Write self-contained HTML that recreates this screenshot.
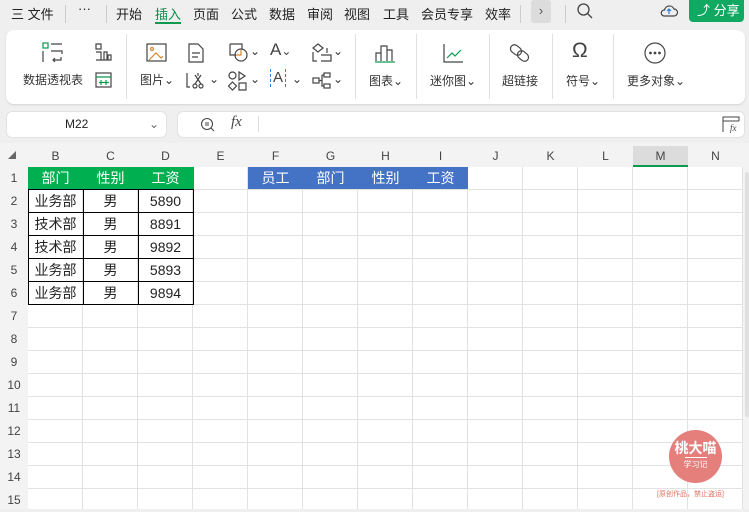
<!DOCTYPE html><html><head><meta charset="utf-8"><style>
*{margin:0;padding:0;box-sizing:border-box}
body{width:749px;height:509px;overflow:hidden;background:#efefef;font-family:"Liberation Sans","Noto Sans CJK SC",sans-serif;color:#222;position:relative}
.a{position:absolute}
.t{font-size:13px;top:4px}
.rb{font-size:12px;color:#333}
.vs{position:absolute;width:1px;background:#e0e0e0}
.ic{position:absolute;stroke:#444;fill:none;stroke-width:1.2}
.ch{position:absolute;top:146px;height:21px;width:55px;text-align:center;font-size:12px;line-height:21px;color:#444}
.rh{position:absolute;left:0;width:28px;text-align:center;font-size:12px;color:#444;height:23px;line-height:23px}
.c{position:absolute;width:55px;height:23px;line-height:22px;text-align:center;font-size:14px}
</style></head><body>
<div class="a t" style="left:11px">三 文件</div>
<div class="a" style="left:65px;top:5px;width:1px;height:18px;background:#ccc"></div>
<div class="a t" style="left:78px;top:1px">···</div>
<div class="a" style="left:106px;top:5px;width:1px;height:18px;background:#ccc"></div>
<div class="a t" style="left:116px">开始</div>
<div class="a t" style="left:155px;color:#0a8f4a">插入</div>
<div class="a" style="left:155px;top:22px;width:26px;height:2px;background:#0a9a50"></div>
<div class="a t" style="left:193px">页面</div>
<div class="a t" style="left:231px">公式</div>
<div class="a t" style="left:269px">数据</div>
<div class="a t" style="left:307px">审阅</div>
<div class="a t" style="left:344px">视图</div>
<div class="a t" style="left:383px">工具</div>
<div class="a t" style="left:421px">会员专享</div>
<div class="a t" style="left:485px">效率</div>
<div class="a" style="left:520px;top:5px;width:1px;height:18px;background:#ccc"></div>
<div class="a" style="left:531px;top:0;width:20px;height:23px;background:#dcdcdc;border-radius:3px;text-align:center;font-size:13px;line-height:22px;color:#555">›</div>
<div class="a" style="left:565px;top:5px;width:1px;height:18px;background:#ccc"></div>
<svg class="a" style="left:576px;top:2px" width="18" height="18"><circle cx="7.5" cy="7.5" r="5.5" stroke="#444" fill="none" stroke-width="1.3"/><path d="M11.5 11.5L16 16" stroke="#444" stroke-width="1.3"/></svg>
<svg class="a" style="left:659px;top:3px" width="20" height="16"><path d="M5 13h10a3.5 3.5 0 0 0 0-7 5 5 0 0 0-9.5 1A3 3 0 0 0 5 13z" stroke="#444" fill="none" stroke-width="1.2"/><path d="M10 11V6M8 8l2-2 2 2" stroke="#2f7de1" fill="none" stroke-width="1.2"/></svg>
<div class="a" style="left:689px;top:0;width:55px;height:22px;background:#11a862;border-radius:0 0 4px 4px;color:#fff;font-size:13px;line-height:21px;padding-left:8px">⤴ 分享</div>
<div class="a" style="left:6px;top:30px;width:739px;height:74px;background:#fff;border-radius:8px;box-shadow:0 1px 2px rgba(0,0,0,.12)"></div>
<div class="vs" style="left:126px;top:34px;height:65px"></div>
<div class="vs" style="left:355px;top:34px;height:65px"></div>
<div class="vs" style="left:416px;top:34px;height:65px"></div>
<div class="vs" style="left:489px;top:34px;height:65px"></div>
<div class="vs" style="left:552px;top:34px;height:65px"></div>
<div class="vs" style="left:613px;top:34px;height:65px"></div>
<svg class="ic" style="left:42px;top:42px" width="22" height="22"><rect x="1" y="1" width="5" height="5" stroke="#0a9a50"/><path d="M9 2h11M1 9v11M9 9h11v3M19 15v3h-8M13 16l-2 2 2 2"/></svg>
<svg class="ic" style="left:95px;top:43px" width="18" height="18"><path d="M1 1h5v5H1zM1 9h5v8H1M9 17V9h3v8M13 17v-5h3v5H1"/></svg>
<svg class="ic" style="left:95px;top:71px" width="18" height="18"><rect x="1" y="2" width="15" height="14"/><path d="M1 6h15M6 9v5M11 9v5M4 11.5h10" stroke="#0a9a50"/></svg>
<div class="a rb" style="left:23px;top:71px">数据透视表</div>
<svg class="ic" style="left:146px;top:43px" width="22" height="20"><rect x="1" y="1" width="19" height="17"/><circle cx="6" cy="6" r="1.5" stroke="#d9852b"/><path d="M3 17l7-7 5 5 2-2" stroke="#d9852b"/></svg>
<div class="a rb" style="left:140px;top:71px">图片⌄</div>
<svg class="ic" style="left:188px;top:43px" width="16" height="20"><path d="M1 1h9l5 5v13H1zM4 10h8M4 14h6"/></svg>
<svg class="ic" style="left:186px;top:72px" width="22" height="18"><path d="M1 1v14h3M12 1v3"/><circle cx="9" cy="14" r="2"/><circle cx="15" cy="14" r="2"/><path d="M9 12l6-9M15 12L9 3"/></svg>
<div class="a rb" style="left:209px;top:72px">⌄</div>
<svg class="ic" style="left:229px;top:43px" width="20" height="20"><path d="M1 1h12v5M1 1v11h6"/><circle cx="12" cy="12" r="6"/><path d="M7 12h5V7" stroke="#d9852b"/></svg>
<div class="a rb" style="left:250px;top:44px">⌄</div>
<svg class="ic" style="left:228px;top:71px" width="20" height="20"><circle cx="4.5" cy="4.5" r="3.5"/><path d="M11 1l6 4-6 4zM4.5 11l4 4-4 4-4-4zM11 12h7v7h-7z"/></svg>
<div class="a rb" style="left:250px;top:72px">⌄</div>
<div class="a" style="left:270px;top:40px;font-size:17px;color:#444">A<span style="font-size:12px">⌄</span></div>
<div class="a" style="left:270px;top:69px;font-size:15px;color:#444;border-left:1px dashed #2f7de1;border-right:1px dashed #2f7de1;padding:0 2px;line-height:18px">A</div><div class="a rb" style="left:292px;top:72px">⌄</div>
<svg class="ic" style="left:312px;top:43px" width="20" height="20"><path d="M6 1l5 4-5 4-5-4zM9 12h10v6H9M1 9v9h4M15 5v5"/></svg>
<div class="a rb" style="left:333px;top:44px">⌄</div>
<svg class="ic" style="left:312px;top:72px" width="20" height="18"><rect x="1" y="6" width="6" height="5"/><rect x="12" y="1" width="6" height="4"/><rect x="12" y="12" width="6" height="4"/><path d="M7 8.5h3M10 3v11h2M10 3h2"/></svg>
<div class="a rb" style="left:333px;top:72px">⌄</div>
<svg class="ic" style="left:375px;top:43px" width="22" height="20"><path d="M1 18V10h5M6 18V3h6v15M12 7h5v11"/><path d="M0 19h20" stroke="#0a9a50"/></svg>
<div class="a rb" style="left:369px;top:72px">图表⌄</div>
<svg class="ic" style="left:442px;top:43px" width="22" height="20"><path d="M2 1v18h19"/><path d="M5 15l5-5 3 3 6-6" stroke="#0a9a50"/></svg>
<div class="a rb" style="left:430px;top:72px">迷你图⌄</div>
<svg class="ic" style="left:509px;top:42px" width="22" height="22"><rect x="1" y="4" width="12" height="8" rx="4" transform="rotate(40 7 8)"/><rect x="8" y="10" width="12" height="8" rx="4" transform="rotate(40 14 14)"/></svg>
<div class="a rb" style="left:502px;top:72px">超链接</div>
<div class="a" style="left:572px;top:39px;font-size:21px;color:#444">Ω</div>
<div class="a rb" style="left:566px;top:72px">符号⌄</div>
<svg class="ic" style="left:644px;top:42px" width="22" height="22"><circle cx="11" cy="11" r="10"/><circle cx="6.5" cy="11" r=".8" fill="#444"/><circle cx="11" cy="11" r=".8" fill="#444"/><circle cx="15.5" cy="11" r=".8" fill="#444"/></svg>
<div class="a rb" style="left:627px;top:72px">更多对象⌄</div>
<div class="a" style="left:6px;top:111px;width:161px;height:27px;background:#fff;border-radius:6px;border:1px solid #e2e2e2;font-size:12px;line-height:25px;padding-left:58px">M22<span style="position:absolute;left:142px;color:#666">⌄</span></div>
<div class="a" style="left:177px;top:111px;width:568px;height:27px;background:#fff;border-radius:6px;border:1px solid #e2e2e2"></div>
<svg class="a" style="left:200px;top:117px" width="16" height="16"><circle cx="7" cy="7" r="5.5" stroke="#444" fill="none" stroke-width="1.1"/><path d="M5 6h4M5 8h4M11 11l3 3" stroke="#444" stroke-width="1.1"/></svg>
<div class="a" style="left:231px;top:114px;font-size:15px;font-style:italic;font-family:'Liberation Serif',serif;color:#444">fx</div>
<div class="a" style="left:258px;top:116px;width:1px;height:16px;background:#ddd"></div>
<svg class="a" style="left:722px;top:116px" width="18" height="17"><path d="M1 5V1h16v4M1 1v15M1 5h16" stroke="#444" fill="none"/><text x="8" y="15" font-size="9" font-style="italic" fill="#444" font-family="Liberation Serif">fx</text></svg>
<div class="a" style="left:0;top:143px;width:749px;height:366px;background:#f3f3f3"></div>
<div class="a" style="left:28px;top:167px;width:715px;height:342px;background-color:#fff;background-image:repeating-linear-gradient(90deg,transparent 0 54px,#e2e2e2 54px 55px),repeating-linear-gradient(180deg,transparent 0 22px,#e2e2e2 22px 23px)"></div>
<div class="a" style="left:743px;top:167px;width:6px;height:342px;background:#f3f3f3"></div>
<div class="a" style="left:745px;top:172px;width:4px;height:245px;background:#e0e0e0;border-radius:2px"></div>
<div class="a" style="left:633px;top:146px;width:55px;height:21px;background:#dcdcdc;border-bottom:2px solid #0a9a50"></div>
<div class="a" style="left:8px;top:150px;font-size:8px;color:#666">◢</div>
<div class="ch" style="left:28px">B</div><div class="ch" style="left:83px">C</div><div class="ch" style="left:138px">D</div><div class="ch" style="left:193px">E</div><div class="ch" style="left:248px">F</div><div class="ch" style="left:303px">G</div><div class="ch" style="left:358px">H</div><div class="ch" style="left:413px">I</div><div class="ch" style="left:468px">J</div><div class="ch" style="left:523px">K</div><div class="ch" style="left:578px">L</div><div class="ch" style="left:633px">M</div><div class="ch" style="left:688px">N</div>
<div class="rh" style="top:167px">1</div><div class="rh" style="top:190px">2</div><div class="rh" style="top:213px">3</div><div class="rh" style="top:236px">4</div><div class="rh" style="top:259px">5</div><div class="rh" style="top:282px">6</div><div class="rh" style="top:305px">7</div><div class="rh" style="top:328px">8</div><div class="rh" style="top:351px">9</div><div class="rh" style="top:374px">10</div><div class="rh" style="top:397px">11</div><div class="rh" style="top:420px">12</div><div class="rh" style="top:443px">13</div><div class="rh" style="top:466px">14</div><div class="rh" style="top:489px">15</div>
<div class="a" style="left:248px;top:167px;width:220px;height:22px;background:#4472c4"></div>
<div class="c" style="left:248px;top:167px;color:#fff">员工</div><div class="c" style="left:303px;top:167px;color:#fff">部门</div><div class="c" style="left:358px;top:167px;color:#fff">性别</div><div class="c" style="left:413px;top:167px;color:#fff">工资</div>
<div class="a" style="left:28px;top:167px;width:166px;height:138px;border:1px solid #000;border-top:none;background-image:linear-gradient(90deg,transparent 54px,#000 54px 55px,transparent 55px 109px,#000 109px 110px,transparent 110px),repeating-linear-gradient(180deg,transparent 0 22px,#000 22px 23px);background-position:0 0"></div>
<div class="a" style="left:28px;top:167px;width:166px;height:23px;background:#00b050;border-bottom:1px solid #000"></div>
<div class="c" style="left:28px;top:167px;color:#fff">部门</div><div class="c" style="left:83px;top:167px;color:#fff">性别</div><div class="c" style="left:138px;top:167px;color:#fff">工资</div>
<div class="c" style="left:28px;top:190px">业务部</div><div class="c" style="left:83px;top:190px">男</div><div class="c" style="left:138px;top:190px">5890</div>
<div class="c" style="left:28px;top:213px">技术部</div><div class="c" style="left:83px;top:213px">男</div><div class="c" style="left:138px;top:213px">8891</div>
<div class="c" style="left:28px;top:236px">技术部</div><div class="c" style="left:83px;top:236px">男</div><div class="c" style="left:138px;top:236px">9892</div>
<div class="c" style="left:28px;top:259px">业务部</div><div class="c" style="left:83px;top:259px">男</div><div class="c" style="left:138px;top:259px">5893</div>
<div class="c" style="left:28px;top:282px">业务部</div><div class="c" style="left:83px;top:282px">男</div><div class="c" style="left:138px;top:282px">9894</div>
<div class="a" style="left:669px;top:430px;width:53px;height:53px;border-radius:50%;background:#e57f7c;color:#fff;text-align:center">
<div style="font-size:14px;font-weight:bold;margin-top:10px;line-height:16px">桃大喵</div>
<div style="width:22px;height:1px;background:#fff;margin:1px auto"></div>
<div style="font-size:8px;line-height:11px">学习记</div></div>
<div class="a" style="left:657px;top:489px;font-size:7px;color:#e07060;white-space:nowrap">[原创作品，禁止盗运]</div>
</body></html>
